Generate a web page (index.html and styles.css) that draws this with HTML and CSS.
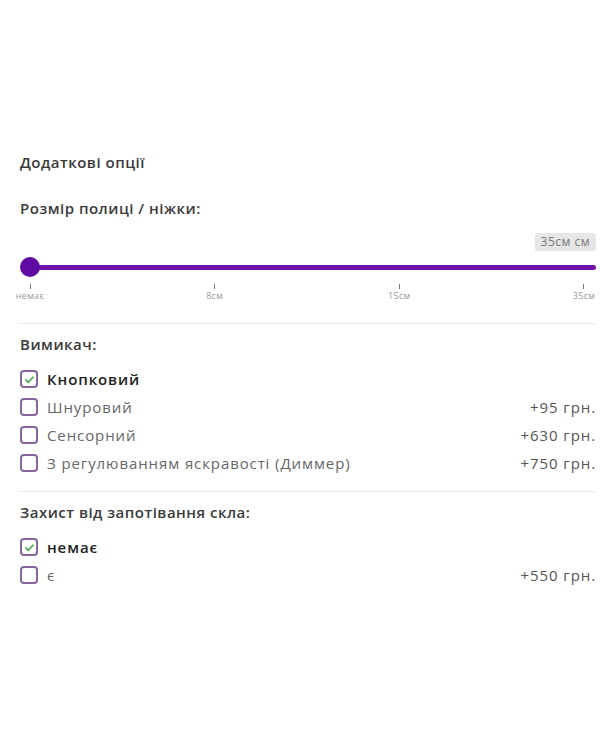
FILE: index.html
```html
<!DOCTYPE html>
<html lang="uk">
<head>
<meta charset="UTF-8">
<meta name="viewport" content="width=device-width, initial-scale=1.0">
<title>Додаткові опції</title>
<link rel="stylesheet" href="styles.css">
</head>
<body>

<div class="options">
    <div class="options-title">Додаткові опції</div>

    <!-- Shelf size slider -->
    <div class="option-group">
        <div class="group-label">Розмір полиці / ніжки:</div>
        <div class="slider-value"><span class="badge">35см см</span></div>
        <div class="slider">
            <div class="slider-track"></div>
            <div class="slider-thumb"></div>
        </div>
        <div class="slider-scale">
            <div class="tick"><span class="tick-line"></span><span class="tick-label">немає</span></div>
            <div class="tick"><span class="tick-line"></span><span class="tick-label">8см</span></div>
            <div class="tick"><span class="tick-line"></span><span class="tick-label">15см</span></div>
            <div class="tick"><span class="tick-line"></span><span class="tick-label">35см</span></div>
        </div>
    </div>

    <hr class="divider">

    <div class="option-group">
        <div class="group-label">Вимикач:</div>
        <div class="choices">
            <label class="choice checked">
                <span class="box"><svg viewBox="0 0 16 16"><path d="M3.5 8.5l3 3 6-6.5"/></svg></span>
                <span class="choice-name">Кнопковий</span>
            </label>
            <label class="choice">
                <span class="box"></span>
                <span class="choice-name">Шнуровий</span>
                <span class="price">+95 грн.</span>
            </label>
            <label class="choice">
                <span class="box"></span>
                <span class="choice-name">Сенсорний</span>
                <span class="price">+630 грн.</span>
            </label>
            <label class="choice">
                <span class="box"></span>
                <span class="choice-name">З регулюванням яскравості (Диммер)</span>
                <span class="price">+750 грн.</span>
            </label>
        </div>
    </div>

    <hr class="divider second">

    <div class="option-group">
        <div class="group-label">Захист від запотівання скла:</div>
        <div class="choices">
            <label class="choice checked">
                <span class="box"><svg viewBox="0 0 16 16"><path d="M3.5 8.5l3 3 6-6.5"/></svg></span>
                <span class="choice-name">немає</span>
            </label>
            <label class="choice">
                <span class="box"></span>
                <span class="choice-name">є</span>
                <span class="price">+550 грн.</span>
            </label>
        </div>
    </div>
</div>

</body>
</html>
```

FILE: styles.css
```css
body {
    font-family: "Open Sans", "Noto Sans", sans-serif;
    margin: 0;
    padding: 0;
    background-color: #fff;
    color: #333;
}
.options {
    padding: 152px 4px 0 20px;
}
.options-title {
    font-size: 15px;
    font-weight: 600;
    letter-spacing: 0.5px;
    line-height: 20px;
    color: #3a3a3a;
    margin-bottom: 26px;
}
.group-label {
    font-size: 15px;
    font-weight: 600;
    letter-spacing: 0.5px;
    line-height: 20px;
    color: #3a3a3a;
}
.slider-value {
    display: flex;
    justify-content: flex-end;
    margin-top: 15px;
}
.badge {
    background-color: #e6e6e6;
    color: #777;
    font-size: 12px;
    letter-spacing: 0.5px;
    line-height: 18px;
    padding: 0 6px;
    border-radius: 3px;
}
.slider {
    position: relative;
    height: 20px;
    margin-top: 6px;
    display: flex;
    align-items: center;
}
.slider-track {
    flex: 1;
    height: 5px;
    margin-left: 10px;
    background-color: #7012ab;
    border-radius: 3px;
}
.slider-thumb {
    position: absolute;
    left: 0;
    top: 0;
    width: 20px;
    height: 20px;
    border-radius: 50%;
    background-color: #5f0aa3;
}
.slider-scale {
    display: flex;
    justify-content: space-between;
    margin: 7px 12px 0 10px;
}
.tick {
    width: 0;
    display: flex;
    flex-direction: column;
    align-items: center;
}
.tick-line {
    width: 1px;
    height: 5px;
    background-color: #777;
}
.tick-label {
    font-size: 9px;
    letter-spacing: 0.3px;
    line-height: 13px;
    color: #999;
    white-space: nowrap;
}
.divider {
    border: none;
    border-top: 1px solid #ececec;
    margin: 21px 0 10px -2px;
}
.divider.second {
    margin-top: 14px;
}
.choices {
    margin-top: 11px;
}
.choice {
    display: flex;
    align-items: center;
    height: 28px;
    font-size: 15px;
    letter-spacing: 0.9px;
    color: #666;
}
.choice .box {
    width: 14px;
    height: 14px;
    border: 2px solid #86649c;
    border-radius: 4px;
    margin-right: 9px;
    display: flex;
    align-items: center;
    justify-content: center;
}
.choice .box svg {
    width: 13px;
    height: 13px;
    fill: none;
    stroke: #4cae50;
    stroke-width: 2;
    stroke-linecap: round;
    stroke-linejoin: round;
}
.choice.checked {
    color: #222;
    font-weight: 600;
}
.choice-name {
    flex: 1;
}
.price {
    color: #555;
}
```
